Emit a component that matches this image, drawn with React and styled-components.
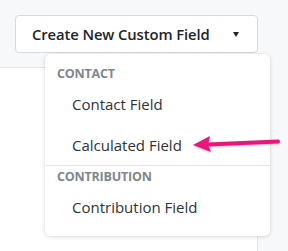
import React from "react";
import styled, { createGlobalStyle } from "styled-components";

const Global = createGlobalStyle`
  html, body { margin: 0; padding: 0; }
  body {
    background: #f7f8fa;
    font-family: "Open Sans", "Noto Sans", Arial, sans-serif;
    color: #212529;
  }
`;

const Page = styled.div`
  position: relative;
  width: 288px;
  height: 251px;
  overflow: hidden;
`;

const Toolbar = styled.div`
  width: 258px;
  box-sizing: border-box;
  padding: 15px 0 14px 15px;
  display: flex;
`;

const Panel = styled.div`
  width: 258px;
  height: 200px;
  box-sizing: border-box;
  background: #fff;
  border-top: 1px solid #e3e5e8;
  border-right: 1px solid #e3e5e8;
`;

const ToggleButton = styled.button`
  flex: 1;
  height: 38px;
  display: flex;
  align-items: center;
  justify-content: space-between;
  padding: 0 18px 0 16px;
  background: #fff;
  border: 1px solid #d6d9dd;
  border-radius: 4px;
  font-family: inherit;
  font-size: 14.8px;
  font-weight: 600;
  color: #212529;
  letter-spacing: -0.1px;
`;

const Caret = styled.span`
  width: 0;
  height: 0;
  border-left: 3.5px solid transparent;
  border-right: 3.5px solid transparent;
  border-top: 5px solid #212529;
`;

const Menu = styled.div`
  position: absolute;
  left: 45px;
  top: 54px;
  width: 225px;
  height: 182px;
  box-sizing: border-box;
  background: #fff;
  border-radius: 5px;
  box-shadow: 0 1px 4px rgba(0, 0, 0, 0.14), 0 0 1px rgba(0, 0, 0, 0.12);
  padding-top: 10px;
`;

const Header = styled.div`
  padding: 0 12px;
  height: 20px;
  line-height: 20px;
  font-size: 12.5px;
  font-weight: 700;
  color: #80868d;
  text-transform: uppercase;
  letter-spacing: -0.2px;
`;

const Item = styled.div`
  padding: 0 27px;
  height: 40.5px;
  line-height: 40.5px;
  font-size: 15px;
  color: #2f3337;
`;

const Divider = styled.div`
  height: 1px;
  background: #e3e5e8;
  margin: 0 0 1px;
`;

const Pointer = styled.svg`
  position: absolute;
  left: 190px;
  top: 132px;
`;

export default function App() {
  return (
    <Page>
      <Global />
      <Toolbar>
        <ToggleButton>
          Create New Custom Field
          <Caret />
        </ToggleButton>
      </Toolbar>
      <Panel />
      <Menu>
        <Header>Contact</Header>
        <Item>Contact Field</Item>
        <Item>Calculated Field</Item>
        <Divider />
        <Header>Contribution</Header>
        <Item>Contribution Field</Item>
      </Menu>
      <Pointer width="95" height="24" viewBox="0 0 95 24">
        <defs>
          <filter id="sh" x="-10%" y="-30%" width="120%" height="160%">
            <feDropShadow dx="0" dy="1" stdDeviation="1" floodColor="#000" floodOpacity="0.25" />
          </filter>
        </defs>
        <g filter="url(#sh)">
          <path d="M18 12.5 L88 9.5" stroke="#e8157c" strokeWidth="4" strokeLinecap="round" fill="none" />
          <path d="M3 13 L20 4 L18 13 L21 20 Z" fill="#e8157c" />
        </g>
      </Pointer>
    </Page>
  );
}
